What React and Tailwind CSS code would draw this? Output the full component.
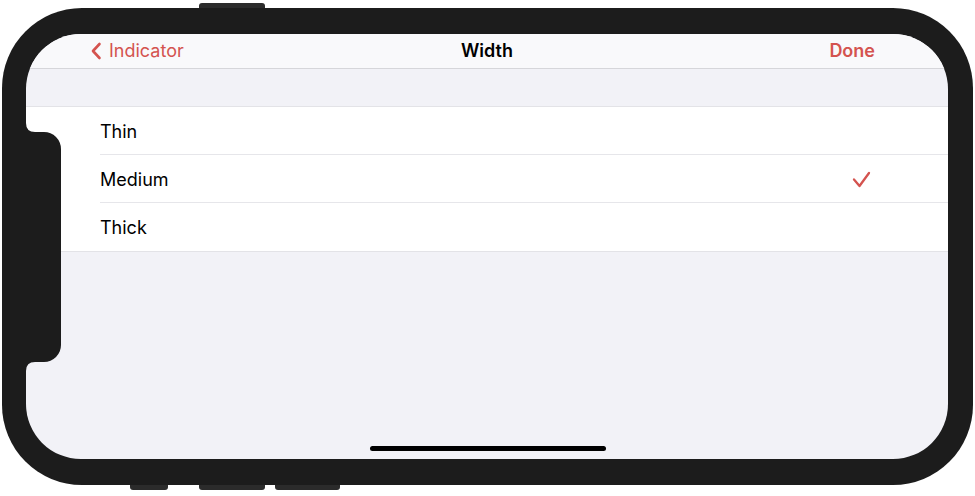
import React from 'react';

const RED = '#d4534f';

function Notch() {
  // sensor housing sticking into the screen from the left bezel
  return (
    <svg className="absolute left-0 top-[86px]" width="40" height="256" viewBox="0 0 40 256">
      <path
        d="M0 3 Q0 12 9 12 L18 12 A17 17 0 0 1 35 29 L35 225 A17 17 0 0 1 18 242 L9 242 Q0 242 0 251 Z"
        fill="#1c1c1c"
      />
    </svg>
  );
}

function Row({ label, checked, last }) {
  return (
    <div className="flex h-[48px] bg-white pl-[74px]">
      <div className={`flex flex-1 items-center justify-between pr-[76px] ${last ? '' : 'border-b border-[#e6e6ea]'}`}>
        <span className="pt-[1px] text-[18px] text-black">{label}</span>
        {checked && (
          <svg width="20" height="18" viewBox="0 0 20 18" className="mt-[2px]">
            <polyline points="2,8.5 7.5,15 17,2" fill="none" stroke={RED} strokeWidth="2.3" strokeLinecap="round" strokeLinejoin="round" />
          </svg>
        )}
      </div>
    </div>
  );
}

export default function App() {
  return (
    <div className="flex h-[496px] w-[975px] flex-col overflow-hidden bg-white" style={{ fontFamily: 'Inter, "Noto Sans", sans-serif' }}>
      {/* top side button */}
      <div className="flex h-[8px] items-end pl-[199px]">
        <div className="h-[5px] w-[66px] rounded-t-[3px] bg-[#2b2b2b]" />
      </div>

      {/* phone body */}
      <div className="ml-[2px] flex h-[477px] w-[971px] rounded-[80px] bg-[#1c1c1c] pb-[26px] pl-[24px] pr-[25px] pt-[26px]">
        <div className="relative flex flex-1 flex-col overflow-hidden rounded-[55px] bg-[#f2f2f7]">
          {/* nav bar */}
          <div className="grid h-[35px] shrink-0 grid-cols-[1fr_auto_1fr] items-center border-b border-[#d6d6da] bg-[#f9f9fb] text-[18px] leading-none">
            <div className="flex items-center gap-[7px] pl-[64px] text-[#d4534f]">
              <svg width="12" height="18" viewBox="0 0 12 18">
                <polyline points="9.5,2 3,9 9.5,16" fill="none" stroke={RED} strokeWidth="2.6" strokeLinecap="round" strokeLinejoin="round" />
              </svg>
              <span>Indicator</span>
            </div>
            <div className="font-semibold text-black">Width</div>
            <div className="pr-[73px] text-right font-semibold text-[#d4534f]">Done</div>
          </div>

          <div className="h-[37px] shrink-0" />

          <div className="shrink-0 border-y border-[#e3e3e7]">
            <Row label="Thin" />
            <Row label="Medium" checked />
            <Row label="Thick" last />
          </div>

          <div className="flex flex-1 items-end justify-center pb-[8px]">
            <div className="ml-[2px] h-[5px] w-[236px] rounded-full bg-black" />
          </div>

          <Notch />
        </div>
      </div>

      {/* bottom side buttons */}
      <div className="flex gap-[7px] pl-[130px]">
        <div className="h-[5px] w-[38px] rounded-b-[3px] bg-[#2b2b2b]" />
        <div className="ml-[24px] h-[5px] w-[66px] rounded-b-[3px] bg-[#2b2b2b]" />
        <div className="ml-[3px] h-[5px] w-[65px] rounded-b-[3px] bg-[#2b2b2b]" />
      </div>
    </div>
  );
}
